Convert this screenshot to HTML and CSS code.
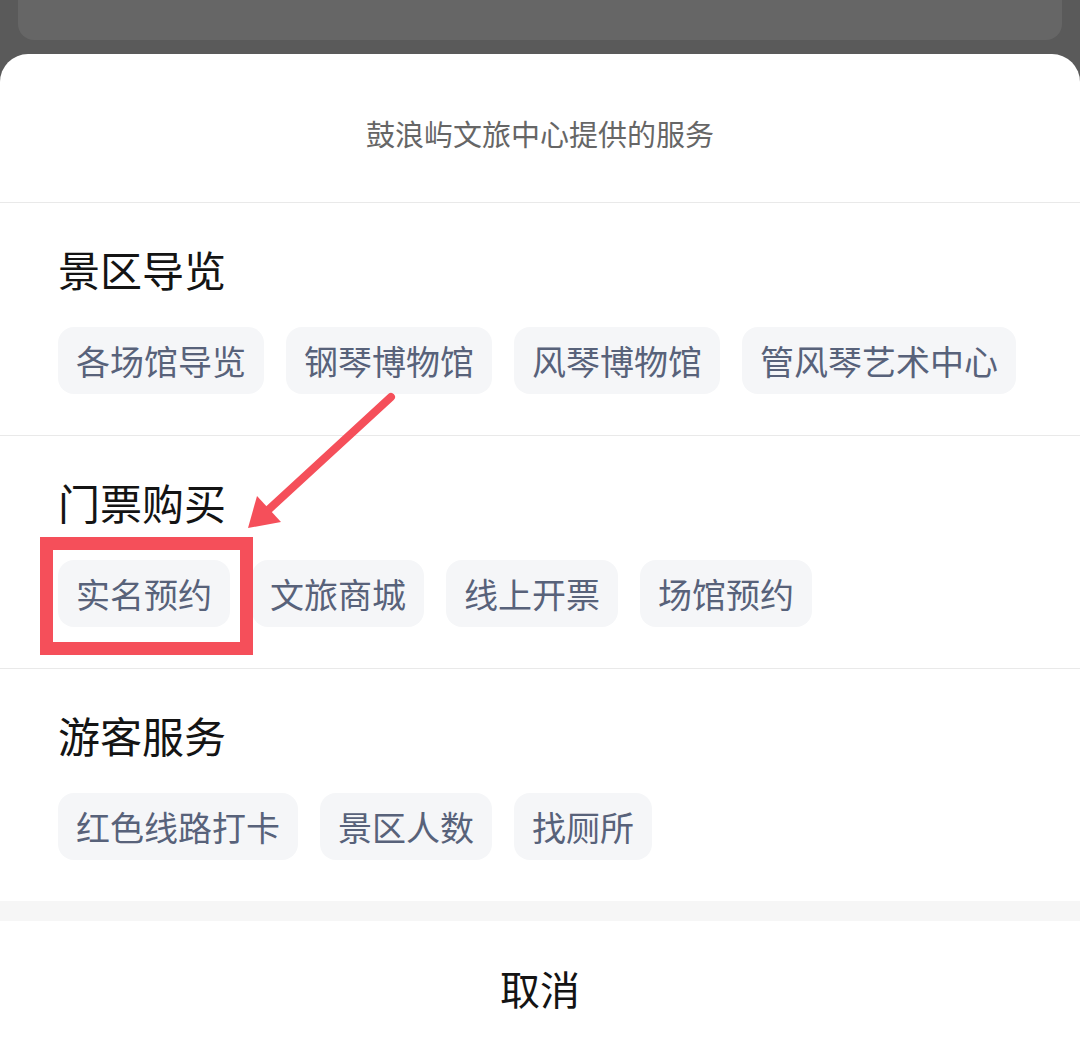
FILE: index.html
```html
<!DOCTYPE html>
<html lang="zh-CN">
<head>
<meta charset="utf-8">
<title>鼓浪屿文旅中心提供的服务</title>
<link rel="stylesheet" href="styles.css">
</head>
<body>
<div class="page">
  <div class="behind-card"></div>
  <div class="sheet">
    <div class="sheet-title">鼓浪屿文旅中心提供的服务</div>
    <section class="group">
      <h2 class="group-title">景区导览</h2>
      <div class="chips">
        <span class="chip">各场馆导览</span>
        <span class="chip">钢琴博物馆</span>
        <span class="chip">风琴博物馆</span>
        <span class="chip">管风琴艺术中心</span>
      </div>
    </section>
    <section class="group">
      <h2 class="group-title">门票购买</h2>
      <div class="chips">
        <span class="chip">实名预约</span>
        <span class="chip">文旅商城</span>
        <span class="chip">线上开票</span>
        <span class="chip">场馆预约</span>
      </div>
    </section>
    <section class="group">
      <h2 class="group-title">游客服务</h2>
      <div class="chips">
        <span class="chip">红色线路打卡</span>
        <span class="chip">景区人数</span>
        <span class="chip">找厕所</span>
      </div>
    </section>
    <div class="band"></div>
    <div class="cancel">取消</div>
  </div>
  <svg class="annotation" width="1080" height="1056" viewBox="0 0 1080 1056">
    <rect x="46.5" y="543.5" width="200" height="105" fill="none" stroke="#f54f5a" stroke-width="13"/>
    <line x1="391" y1="397" x2="266" y2="512" stroke="#f54f5a" stroke-width="8" stroke-linecap="round"/>
    <polygon points="248,528 257,496 281,522" fill="#f54f5a"/>
  </svg>
</div>
</body>
</html>
```
FILE: styles.css
```css
html, body {
  margin: 0;
  padding: 0;
}
body {
  background: #5a5a5a;
  font-family: "Noto Sans CJK SC", "Noto Sans", sans-serif;
}
.page {
  position: relative;
  width: 1080px;
  height: 1056px;
  overflow: hidden;
}
.behind-card {
  margin: 0 18px;
  height: 40px;
  background: #666666;
  border-radius: 0 0 16px 16px;
}
.sheet {
  margin-top: 14px;
  background: #ffffff;
  border-radius: 28px 28px 0 0;
  height: 1002px;
}
.sheet-title {
  height: 86px;
  padding-top: 62px;
  line-height: 34px;
  font-size: 29px;
  color: #666666;
  text-align: center;
}
.group {
  border-top: 1px solid #e9e9e9;
  padding: 44px 0 41px 58px;
}
.group-title {
  margin: 0 0 36px 0;
  font-size: 42px;
  line-height: 44px;
  font-weight: 400;
  color: #141414;
}
.chips {
  display: flex;
  gap: 22px;
}
.chip {
  display: block;
  height: 67px;
  line-height: 67px;
  padding: 0 18px;
  font-size: 34px;
  color: #58627a;
  background: #f5f6f8;
  border-radius: 16px;
}
.band {
  height: 20px;
  background: #f6f6f6;
}
.cancel {
  height: 134px;
  line-height: 134px;
  text-align: center;
  font-size: 40px;
  color: #141414;
}
.annotation {
  position: absolute;
  top: 0;
  left: 0;
  pointer-events: none;
}
```
